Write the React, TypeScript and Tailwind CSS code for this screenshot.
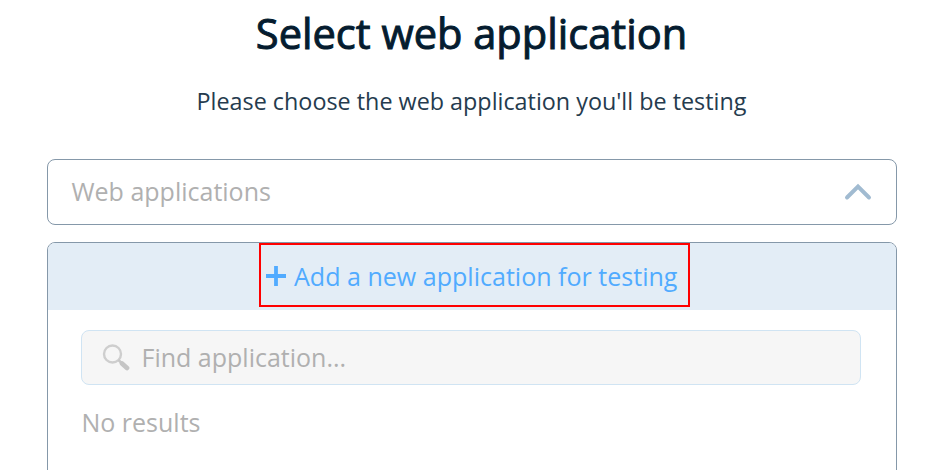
export default function App() {
  return (
    <main className="h-[470px] w-full overflow-hidden bg-white px-[47px] font-['Open_Sans',sans-serif]">
      <h1 className="mt-[5px] pr-[2px] text-center text-[41.6px] leading-[57px] font-normal text-[#051c2f] [-webkit-text-stroke:1px_#051c2f]">Select web application</h1>
      <p className="mt-[22px] pr-[2px] text-center text-[23.35px] leading-[34px] text-[#253b4e]">Please choose the web application you'll be testing</p>
      <div className="mt-[41px] flex h-[66px] w-[850px] items-center justify-between rounded-[8px] border border-[#8598a9] pr-[24px] pl-[23.5px] text-[25px] text-[#b0b0b0]">
        <span>Web applications</span>
        <svg width="28" height="18" viewBox="0 0 28 18" fill="none"><path d="M3 14.5L14 3.5L25 14.5" stroke="#a1bbd1" strokeWidth="3.9" strokeLinecap="round" /></svg>
      </div>
      <section className="mt-[17px] h-[260px] w-[850px] overflow-hidden rounded-t-[8px] border border-[#8598a9]">
        <div className="flex h-[67px] bg-[#e3edf6] pl-[211px]">
          <button className="flex h-[64px] w-[431px] items-center border-2 border-[#ff0000] pt-[3px] pl-[5px] text-[25px] text-[#51abff]">
            <svg className="mb-[2px]" width="20" height="20" viewBox="0 0 20 20"><path d="M10 0V20M0 10H20" stroke="currentColor" strokeWidth="3.8" /></svg>
            <span className="ml-[8px] text-[25.05px] whitespace-nowrap">Add a new application for testing</span>
          </button>
        </div>
        <div className="mt-[20px] ml-[33px] flex h-[55px] w-[780px] items-center rounded-[8px] border border-[#d0e4f3] bg-[#f6f6f6] pl-[20px] text-[25px] text-[#b0b0b0]">
          <svg width="28" height="28" viewBox="0 0 28 28" fill="none"><circle cx="10.5" cy="10" r="8.5" stroke="#cecece" strokeWidth="2.4" /><path d="M16.5 16L19.5 19" stroke="#c8c8c8" strokeWidth="2.5" /><path d="M20 19.5L25 24" stroke="#c5c5c5" strokeWidth="4.7" strokeLinecap="round" /></svg>
          <span className="ml-[11.5px]">Find application...</span>
        </div>
        <p className="mt-[19px] ml-[33.5px] text-[25px] leading-[36px] text-[#b0b0b0]">No results</p>
      </section>
    </main>
  );
}
